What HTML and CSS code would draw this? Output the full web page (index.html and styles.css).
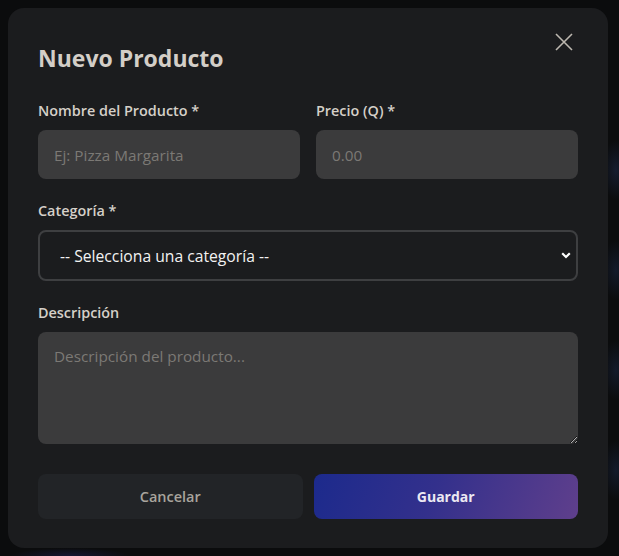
FILE: index.html
```html
<!DOCTYPE html>
<html lang="es">
<head>
<meta charset="utf-8">
<title>Nuevo Producto</title>
<link rel="stylesheet" href="styles.css">
</head>
<body>
<div class="modal">
  <button class="close" aria-label="Cerrar">
    <svg width="18" height="18" viewBox="0 0 18 18"><path d="M1 1 L17 17 M17 1 L1 17" stroke="#bdb8b0" stroke-width="1.6" fill="none"/></svg>
  </button>
  <h2 class="title">Nuevo Producto</h2>
  <div class="row">
    <div class="field">
      <label class="label">Nombre del Producto *</label>
      <input class="input" type="text" placeholder="Ej: Pizza Margarita">
    </div>
    <div class="field">
      <label class="label">Precio (Q) *</label>
      <input class="input" type="text" placeholder="0.00">
    </div>
  </div>
  <div class="field">
    <label class="label">Categoría *</label>
    <div class="select-wrap">
      <select class="select"><option>-- Selecciona una categoría --</option></select>
      <svg class="chev" width="10" height="7" viewBox="0 0 10 7"><path d="M1.2 1.3 L5 5 L8.8 1.3" stroke="#ffffff" stroke-width="2.2" fill="none"/></svg>
    </div>
  </div>
  <div class="field">
    <label class="label">Descripción</label>
    <textarea class="textarea" placeholder="Descripción del producto..."></textarea>
  </div>
  <div class="actions">
    <button class="btn btn-cancel">Cancelar</button>
    <button class="btn btn-save">Guardar</button>
  </div>
</div>
</body>
</html>
```
FILE: styles.css
```css
* { box-sizing: border-box; }
html, body { height: 100%; }
body {
  margin: 0;
  padding: 8px;
  background: #0b0c0d;
  background-image:
    radial-gradient(ellipse 14px 30px at 616px 170px, rgba(40,60,110,0.35), transparent),
    radial-gradient(ellipse 14px 30px at 616px 270px, rgba(40,60,110,0.3), transparent),
    radial-gradient(ellipse 14px 30px at 616px 370px, rgba(40,60,110,0.3), transparent),
    radial-gradient(ellipse 14px 30px at 616px 470px, rgba(40,60,110,0.3), transparent),
    radial-gradient(ellipse 60px 8px at 70px 556px, rgba(40,40,120,0.35), transparent);
  font-family: "Open Sans", "Noto Sans", sans-serif;
  overflow: hidden;
}
.modal {
  position: relative;
  width: 600px;
  height: 540px;
  background: #1b1c1e;
  border-radius: 16px;
  padding: 30px 30px 29px;
  display: flex;
  flex-direction: column;
}
.close {
  position: absolute;
  top: 25px;
  right: 35px;
  background: none;
  border: 0;
  padding: 0;
  width: 18px;
  height: 18px;
  cursor: pointer;
}
.close svg { display: block; }
.title {
  margin: 0 0 23px;
  font-size: 23px;
  line-height: 40px;
  font-weight: 700;
  color: #d3cec7;
}
.row {
  display: flex;
  gap: 16px;
}
.row .field { flex: 1; }
.field {
  display: flex;
  flex-direction: column;
  margin-bottom: 22px;
}
.label {
  font-size: 14.4px;
  line-height: 20px;
  font-weight: 600;
  color: #d5d0c9;
  margin-bottom: 9px;
}
.input, .textarea {
  background: #3b3b3c;
  border: 0;
  border-radius: 8px;
  color: #e6e6e6;
  font-family: inherit;
  font-size: 15.3px;
  padding: 0 16px;
  outline: none;
}
.input { height: 49px; }
.textarea {
  height: 112px;
  padding: 14px 16px;
  resize: vertical;
  color-scheme: dark;
}
.input::placeholder, .textarea::placeholder { color: #7b7975; }
.select-wrap { position: relative; }
.select {
  width: 100%;
  height: 51px;
  appearance: none;
  -webkit-appearance: none;
  background: #1b1c1e;
  border: 2px solid #3e3f41;
  border-radius: 8px;
  color: #f2f2f2;
  font-family: inherit;
  font-size: 15.7px;
  padding: 0 20px;
  outline: none;
}
.chev {
  position: absolute;
  right: 7px;
  top: 22px;
  pointer-events: none;
}
.actions {
  margin-top: 8px;
  display: flex;
  gap: 11px;
}
.btn {
  flex: 1;
  height: 45px;
  border: 0;
  border-radius: 8px;
  font-family: inherit;
  font-size: 14.5px;
  font-weight: 600;
  cursor: pointer;
}
.btn-cancel {
  background: #222427;
  color: #a9a49d;
}
.btn-save {
  background: linear-gradient(110deg, #1c2a8c 0%, #33308c 45%, #5f3f8c 100%);
  color: #ece8f2;
  font-size: 14px;
  font-weight: 700;
}
```
